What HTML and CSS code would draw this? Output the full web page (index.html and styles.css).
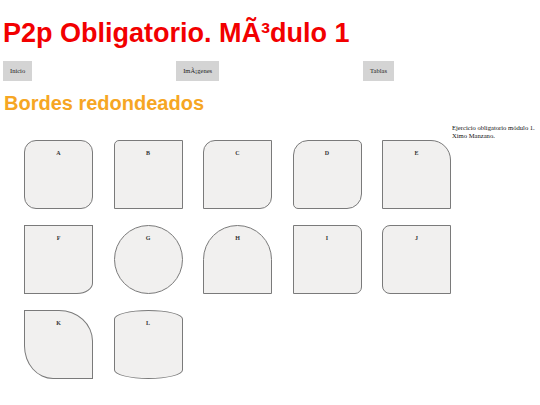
FILE: index.html
```html
<!DOCTYPE html>
<html lang="es">
<head>
<meta charset="utf-8">
<title>P2p Obligatorio</title>
<link rel="stylesheet" href="styles.css">
</head>
<body>
<header class="cabecera">
  <h1 class="titulo">P2p Obligatorio. MÃ³dulo 1</h1>
  <nav class="menu">
    <a class="boton" href="#">Inicio</a>
    <a class="boton" href="#">ImÃ¡genes</a>
    <a class="boton" href="#">Tablas</a>
  </nav>
</header>
<h2 class="seccion">Bordes redondeados</h2>
<main class="contenido">
  <div class="rejilla">
    <div class="caja caja-a">A</div>
    <div class="caja caja-b">B</div>
    <div class="caja caja-c">C</div>
    <div class="caja caja-d">D</div>
    <div class="caja caja-e">E</div>
    <div class="caja caja-f">F</div>
    <div class="caja caja-g">G</div>
    <div class="caja caja-h">H</div>
    <div class="caja caja-i">I</div>
    <div class="caja caja-j">J</div>
    <div class="caja caja-k">K</div>
    <div class="caja caja-l">L</div>
  </div>
  <aside class="nota">Ejercicio obligatorio módulo 1.<br>Ximo Manzano.</aside>
</main>
</body>
</html>
```

FILE: styles.css
```css
html, body {
  margin: 0;
  padding: 0;
  background: #ffffff;
}

body {
  padding: 0 3px;
  font-family: "Liberation Serif", "Times New Roman", serif;
}

.titulo {
  margin: 0;
  padding-top: 17px;
  font-family: "Liberation Sans", Arial, sans-serif;
  font-weight: bold;
  font-size: 27px;
  line-height: 32px;
  color: #f20000;
}

.menu {
  display: flex;
  gap: 144px;
  margin-top: 12px;
}

.boton {
  display: block;
  background: #d4d4d4;
  color: #222;
  text-decoration: none;
  font-size: 6.5px;
  line-height: 20px;
  height: 20px;
  padding: 0 7px;
}

.seccion {
  margin: 10px 0 0 1px;
  font-family: "Liberation Sans", Arial, sans-serif;
  font-weight: bold;
  font-size: 20px;
  line-height: 24px;
  color: #f6a623;
}

.contenido {
  display: flex;
  align-items: flex-start;
  margin-top: 9px;
}

.rejilla {
  display: grid;
  grid-template-columns: repeat(5, 69px);
  grid-auto-rows: 69px;
  column-gap: 20.5px;
  row-gap: 16px;
  margin-left: 21px;
  margin-top: 16px;
}

.caja {
  box-sizing: border-box;
  background: #f1f0ef;
  border: 1px solid #7a7a7a;
  text-align: center;
  font-size: 6px;
  font-weight: bold;
  color: #333;
  padding-top: 9px;
}

.caja-a { border-radius: 12px; }
.caja-b { border-radius: 5px 0 0 0; }
.caja-c { border-radius: 12px 0 12px 0; }
.caja-d { border-radius: 15px 5px 15px 5px; }
.caja-e { border-radius: 0 20px 0 0; }
.caja-f { border-radius: 0 0 16px 0 / 0 0 11px 0; }
.caja-g { border-radius: 50%; }
.caja-h { border-radius: 50% 50% 0 0 / 50% 50% 0 0; }
.caja-i { border-radius: 0 7px 7px 0; }
.caja-j { border-radius: 8px 0 0 8px; }
.caja-k { border-radius: 0 34px 0 29px / 0 31px 0 33px; }
.caja-l { border-radius: 50% / 13%; }

.nota {
  margin-left: 1px;
  font-size: 6.6px;
  line-height: 8px;
  color: #111;
}
```
